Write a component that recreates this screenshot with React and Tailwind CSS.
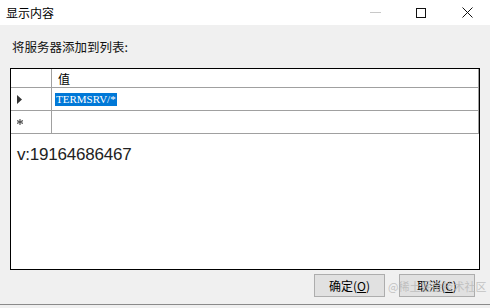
const font = { fontFamily: '"Noto Sans CJK SC", "Microsoft YaHei", sans-serif' };

export default function App() {
  return (
    <div className="relative w-[490px] h-[308px] bg-[#f0f0f0] overflow-hidden text-[#000]" style={font}>
      {/* title bar */}
      <div className="h-[25px] bg-white flex items-center justify-between">
        <span className="pl-[6px] text-[12px] leading-none">显示内容</span>
        <div className="flex items-center h-full">
          <div className="w-[46px] h-full flex items-center justify-center">
            <div className="w-[11px] h-px bg-[#c8c8c8]" />
          </div>
          <div className="w-[46px] h-full flex items-center justify-center">
            <div className="w-[10px] h-[10px] border border-[#111]" />
          </div>
          <div className="w-[46px] h-full flex items-center justify-center">
            <svg width="11" height="11" viewBox="0 0 11 11">
              <path d="M0.5 0.5 L10.5 10.5 M10.5 0.5 L0.5 10.5" stroke="#111" strokeWidth="1" />
            </svg>
          </div>
        </div>
      </div>

      <div className="px-[10px]">
        <div className="h-[43px] pt-[16px] pl-[2px] text-[12.5px] leading-none text-[#111]">将服务器添加到列表:</div>

        <div className="w-[470px] h-[202px] bg-white border border-[#000] flex flex-col">
          {/* grid */}
          <div className="w-[468px] border-r border-[#a0a0a0]">
            <div className="flex h-[19px] border-b border-[#a0a0a0]">
              <div className="w-[41px] border-r border-[#a0a0a0]" />
              <div className="pl-[6px] text-[12px] leading-[19px]">值</div>
            </div>
            <div className="flex h-[23px] border-b border-[#a0a0a0]">
              <div className="w-[41px] border-r border-[#a0a0a0] flex items-center pl-[6px]">
                <svg width="5" height="9" viewBox="0 0 5 9"><path d="M0 0 L5 4.5 L0 9 Z" fill="#333" /></svg>
              </div>
              <div className="pl-[3px] flex items-center">
                <span className="bg-[#0078d7] text-white text-[11px] leading-[13px] px-[1px]" style={{ fontFamily: '"Liberation Serif", serif' }}>TERMSRV/*</span>
              </div>
            </div>
            <div className="flex h-[23px] border-b border-[#a0a0a0]">
              <div className="w-[41px] border-r border-[#a0a0a0] flex items-center pl-[6px]">
                <svg width="6" height="6" viewBox="0 0 6 6">
                  <path d="M3 0 V6 M0 1.5 L6 4.5 M6 1.5 L0 4.5" stroke="#555" strokeWidth="1.2" />
                </svg>
              </div>
            </div>
          </div>
          <div className="pl-[6px] pt-[12px] text-[17px] tracking-[-0.2px] leading-none text-[#222]" style={{ fontFamily: '"Liberation Sans", Arial, sans-serif' }}>
            v:19164686467
          </div>
        </div>

        <div className="flex justify-end gap-[14px] pt-[4px] pr-[5px]">
          <button className="w-[71px] h-[23px] bg-[#e1e1e1] border border-[#adadad] text-[12px] leading-none">确定(<u>O</u>)</button>
          <button className="w-[76px] h-[23px] bg-[#e1e1e1] border border-[#adadad] text-[12px] leading-none">取消(<u>C</u>)</button>
        </div>
      </div>

      <div className="absolute left-0 right-0 top-[304px] h-[4px] border-t border-[#8a8a8a] bg-[#f0f0f0]" />
      <span className="absolute left-[388px] top-[281px] text-[11px] leading-none text-[#b8b8b8] opacity-80">@稀土掘金技术社区</span>
    </div>
  );
}
